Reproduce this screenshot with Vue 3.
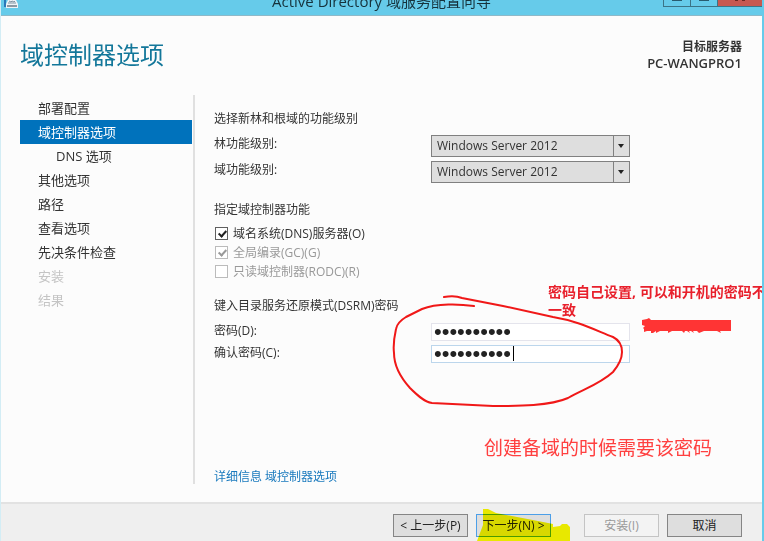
<template>
  <div class="wizard">
    <header class="titlebar">
      <svg class="app-icon" width="18" height="8" viewBox="0 0 18 8" aria-hidden="true">
        <path d="M4 0v7" stroke="#2a78b8" stroke-width="2" />
        <path d="M5 8V4l2-4h8l2 4v4z" fill="#eef3f7" />
        <path d="M7 3h8M8 1l2 1 1-1 2 1 1-1" stroke="#7f93a2" fill="none" />
        <path d="M6 6h10" stroke="#8b98a2" stroke-width="2" />
      </svg>
      <div class="titlebar-text">Active Directory 域服务配置向导</div>
      <div class="window-buttons">
        <button class="window-button" type="button" aria-label="最小化">
          <svg width="12" height="6" viewBox="0 0 12 6"><path d="M1 0h10" stroke="#285c70" stroke-width="2" /></svg>
        </button>
        <button class="window-button" type="button" aria-label="最大化">
          <svg width="12" height="6" viewBox="0 0 12 6"><path d="M1 0h10" stroke="#285c70" stroke-width="2" /></svg>
        </button>
        <button class="window-button close" type="button" aria-label="关闭">
          <svg width="12" height="6" viewBox="0 0 12 6"><path d="M1 0h3M8 0h3" stroke="#6d2822" stroke-width="2" /></svg>
        </button>
      </div>
    </header>

    <div class="page-head">
      <h1 class="page-title">域控制器选项</h1>
      <div class="target">
        <div>目标服务器</div>
        <div class="target-name">PC-WANGPRO1</div>
      </div>
    </div>

    <div class="content">
      <nav class="steps">
        <div
          v-for="step in steps"
          :key="step.name"
          class="step"
          :class="{ active: step.active, child: step.child, disabled: step.disabled }"
        >
          {{ step.name }}
        </div>
      </nav>

      <main class="options">
        <h2 class="group-title levels">选择新林和根域的功能级别</h2>
        <div class="field level">
          <label for="forest">林功能级别:</label>
          <div class="select-box">
            <select id="forest" v-model="forestLevel">
              <option>Windows Server 2012</option>
            </select>
            <span class="arrow"></span>
          </div>
        </div>
        <div class="field level">
          <label for="domain">域功能级别:</label>
          <div class="select-box">
            <select id="domain" v-model="domainLevel">
              <option>Windows Server 2012</option>
            </select>
            <span class="arrow"></span>
          </div>
        </div>

        <h2 class="group-title roles">指定域控制器功能</h2>
        <label
          v-for="role in roles"
          :key="role.name"
          class="check"
          :class="{ disabled: role.disabled }"
        >
          <input v-model="role.checked" type="checkbox" :disabled="role.disabled" />
          <span>{{ role.name }}</span>
        </label>

        <h2 class="group-title dsrm">键入目录服务还原模式(DSRM)密码</h2>
        <div class="field secret">
          <label for="password">密码(D):</label>
          <input id="password" v-model="password" type="password" />
        </div>
        <div class="field secret">
          <label for="confirm">确认密码(C):</label>
          <div class="confirm-box">
            <input id="confirm" v-model="confirm" class="focused" type="password" />
            <span class="caret"></span>
          </div>
        </div>

        <a class="more" href="#">详细信息 域控制器选项</a>

        <!-- marks drawn over the form -->
        <svg class="circle" width="240" height="120" viewBox="0 0 240 120" aria-hidden="true">
          <path
            d="M54 7c6-1 13-1 18 1l41 8 50 11c25 4 42 13 60 20 6 3 9 8 9 15 0 8-4 14-9 20-13 12-29 17-45 26-18 8-49 8-75 8l-61-3c-8-1-16-9-22-15C11 88 4 77 4 63c-1-8 0-15 2-24 1-6 5-9 10-12l16-8c15-6 38-5 52-3"
            fill="none"
            stroke="#f01818"
            stroke-width="2"
            stroke-linecap="round"
          />
        </svg>
        <div class="note-top">密码自己设置, 可以和开机的密码不<br />一致</div>
        <svg class="scribble" width="90" height="16" viewBox="0 0 90 16" aria-hidden="true">
          <path
            d="M0 2l5-1 2-1 2 2h80v11H78l1 2-4-2H62l-5 2-2-2h-4l1 2-3-2h-2l1 2-3-2h-2l-1 2-2-2H30l-4 2v-2h-8l-4 2v-2l-3 2H9v-2H5l-3 1v-3l-1-1 2-2-3-1z"
            fill="#ff3434"
          />
        </svg>
        <div class="note-bottom">创建备域的时候需要该密码</div>
      </main>
    </div>

    <footer class="footer">
      <button type="button">&lt; 上一步(P)</button>
      <button class="next" type="button">
        下一步(N) &gt;
        <svg class="marker" width="96" height="32" viewBox="0 0 96 32" aria-hidden="true">
          <path d="M6 0h5l8 4 42 8 15 3v3l7-1 2-2h5l3 3v14H0l6-16z" fill="#f8f800" />
        </svg>
      </button>
      <button class="install" type="button" disabled>安装(I)</button>
      <button type="button">取消</button>
    </footer>
  </div>
</template>

<script setup>
import { ref } from "vue";

const steps = [
  { name: "部署配置" },
  { name: "域控制器选项", active: true },
  { name: "DNS 选项", child: true },
  { name: "其他选项" },
  { name: "路径" },
  { name: "查看选项" },
  { name: "先决条件检查" },
  { name: "安装", disabled: true },
  { name: "结果", disabled: true },
];

const roles = ref([
  { name: "域名系统(DNS)服务器(O)", checked: true, disabled: false },
  { name: "全局编录(GC)(G)", checked: true, disabled: true },
  { name: "只读域控制器(RODC)(R)", checked: false, disabled: true },
]);

const forestLevel = ref("Windows Server 2012");
const domainLevel = ref("Windows Server 2012");
const password = ref("0123456789");
const confirm = ref("0123456789");
</script>

<style>
body {
  margin: 0;
  background: #66cbea;
}
</style>

<style scoped>
.wizard {
  display: flex;
  flex-direction: column;
  min-height: 100vh;
  box-sizing: border-box;
  border-left: 1px solid #d3edf5;
  border-right: 2px solid #66cbea;
  background: #fcfcfc;
  color: #333;
  font-family: "Open Sans", "Noto Sans CJK SC", sans-serif;
  font-size: 12px;
  line-height: 20px;
  overflow: hidden;
}

button,
input,
select {
  box-sizing: border-box;
  margin: 0;
  font: inherit;
  color: inherit;
  border-radius: 0;
}

.titlebar {
  display: grid;
  grid-template-columns: 1fr auto 1fr;
  align-items: start;
  height: 15px;
  background: #66cbea;
  border-bottom: 1px solid #8fb9c8;
}

.titlebar-text {
  margin-top: -9px;
  font-size: 15px;
  color: #16323c;
}

.window-buttons {
  display: flex;
  justify-content: flex-end;
}

.window-button {
  display: flex;
  justify-content: center;
  width: 27px;
  height: 7px;
  padding: 0;
  border: 1px solid #3b7487;
  border-top: 0;
  border-right: 0;
  background: #66cbea;
}

.window-button.close {
  width: 45px;
  background: #c75850;
}

.page-head {
  display: flex;
  justify-content: space-between;
  align-items: flex-start;
  box-sizing: border-box;
  height: 79px;
  padding: 21px 20px 0 19px;
}

.page-title {
  margin: 0;
  font-size: 24px;
  line-height: 36px;
  font-weight: 400;
  color: #13779a;
}

.target {
  margin-top: 2px;
  text-align: right;
  font-weight: 600;
  line-height: 16px;
}

.target-name {
  font-size: 13px;
}

.content {
  display: flex;
  flex: 1;
  padding-bottom: 18px;
}

.steps {
  width: 172px;
  padding: 1px 1px 0 0;
  margin-left: 19px;
  border-right: 2px solid #e0e0e0;
}

.step {
  padding-left: 18px;
  font-size: 13px;
  line-height: 24px;
}

.step.active {
  background: #0072bc;
  color: #fff;
}

.step.child {
  padding-left: 36px;
}

.step.disabled {
  color: #c4c4c4;
}

.options {
  position: relative;
  display: flex;
  flex-direction: column;
  flex: 1;
  padding: 14px 0 0 19px;
}

.group-title {
  margin: 0;
  font-size: 12px;
  font-weight: 400;
}

.group-title.levels {
  margin-bottom: 2px;
}

.group-title.roles {
  margin-top: 17px;
  margin-bottom: 4px;
}

.group-title.dsrm {
  margin-top: 15px;
  margin-bottom: 5px;
}

.field {
  display: grid;
  grid-template-columns: 217px 199px;
}

.field.level {
  height: 26px;
}

.field.level label {
  padding-top: 3px;
}

.select-box {
  position: relative;
  align-self: end;
  height: 22px;
}

.select-box select {
  appearance: none;
  width: 100%;
  height: 22px;
  padding: 0 20px 0 5px;
  border: 1px solid #808080;
  background: #dedede;
  line-height: 20px;
}

.arrow {
  position: absolute;
  top: 1px;
  right: 1px;
  width: 15px;
  height: 20px;
  border-left: 1px solid #808080;
  pointer-events: none;
}

.arrow::after {
  content: "";
  position: absolute;
  top: 8px;
  left: 4px;
  border: 3px solid transparent;
  border-top: 4px solid #222;
  border-bottom: 0;
}

.check {
  display: flex;
  align-items: center;
  gap: 5px;
  height: 19px;
  padding-left: 1px;
}

.check.disabled {
  color: #999;
}

.check input {
  appearance: none;
  width: 13px;
  height: 13px;
  border: 1px solid #606060;
  background: #fff;
}

.check.disabled input {
  border-color: #bbb;
}

.check input:checked::after {
  content: "";
  display: block;
  width: 3px;
  height: 6px;
  margin: 1px 0 0 4px;
  border: solid #222;
  border-width: 0 2px 2px 0;
  transform: rotate(42deg);
}

.check.disabled input:checked::after {
  border-color: #999;
}

.field.secret {
  height: 22px;
}

.field.secret input {
  width: 100%;
  height: 18px;
  margin-top: 2px;
  padding: 0 2px;
  border: 1px solid #e4e4ec;
  background: #fff;
  color: #222;
  font-family: "Liberation Sans", sans-serif;
  font-size: 22px;
  line-height: 16px;
}

.field.secret .focused {
  border-color: #bcd6ec;
}

.confirm-box {
  position: relative;
}

.caret {
  position: absolute;
  top: 3px;
  left: 82px;
  width: 1px;
  height: 15px;
  background: #000;
}

.more {
  align-self: flex-start;
  margin-top: auto;
  line-height: 14px;
  color: #1979bd;
  text-decoration: none;
}

.circle {
  position: absolute;
  top: 195px;
  left: 195px;
}

.note-top {
  position: absolute;
  top: 188px;
  left: 353px;
  font-size: 14px;
  font-weight: 700;
  line-height: 18px;
  white-space: nowrap;
  color: #e8202c;
}

.scribble {
  position: absolute;
  top: 223px;
  left: 447px;
}

.note-bottom {
  position: absolute;
  top: 339px;
  left: 289px;
  font-size: 19px;
  line-height: 28px;
  color: #ff4040;
}

.footer {
  display: flex;
  justify-content: flex-end;
  gap: 8px;
  height: 39px;
  box-sizing: border-box;
  padding: 10px 20px 0 0;
  border-top: 2px solid #e2e2e2;
  background: #efefef;
}

.footer button {
  position: relative;
  width: 75px;
  height: 23px;
  padding: 0;
  border: 1px solid #858585;
  background: #dedede;
  color: #222;
  white-space: nowrap;
}

.footer .next {
  border-color: #4c9fe8;
}

.footer .install {
  margin-left: 25px;
  border-color: #c4c4c4;
  background: #f3f3f3;
  color: #999;
}

.marker {
  position: absolute;
  top: -6px;
  left: 0;
  mix-blend-mode: multiply;
  pointer-events: none;
}
</style>
